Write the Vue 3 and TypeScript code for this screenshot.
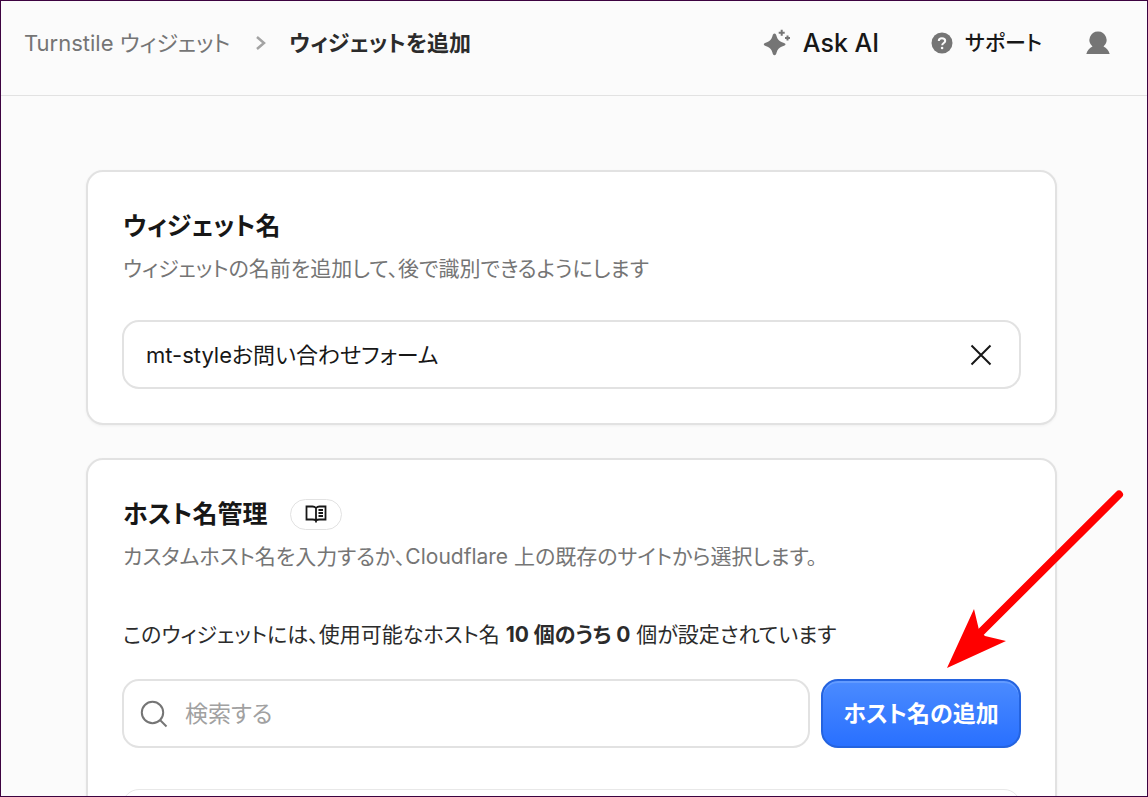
<script setup lang="ts">
import { ref } from 'vue'

const widgetName = ref<string>('mt-styleお問い合わせフォーム')
const query = ref<string>('')
const used = 0
const limit = 10
</script>

<template>
  <div class="page">
    <header class="topbar">
      <nav class="crumbs" aria-label="パンくずリスト">
        <a class="crumb-link" href="#">Turnstile ウィジェット</a>
        <svg class="chevron" viewBox="0 0 12 16" aria-hidden="true"><path d="M2 2l7 6-7 6" /></svg>
        <span class="crumb-current" aria-current="page">ウィジェットを追加</span>
      </nav>
      <div class="actions">
        <button class="action ask" type="button">
          <svg class="icon-spark" viewBox="0 0 28 28" aria-hidden="true">
            <path class="fill" d="M11.500 4.500C12.700 4.500 13.100 5.500 13.600 7.200C14.700 10.500 16 12 19 13.200C21 13.900 22.500 14.200 22.500 15.300C22.500 16.400 21 16.700 19 17.400C16 18.600 14.700 20.100 13.600 23.400C13.100 25.100 12.700 26.200 11.500 26.200C10.300 26.200 9.900 25.100 9.400 23.400C8.300 20.100 7 18.600 4 17.400C2 16.700 .800 16.400 .800 15.300C.800 14.200 2 13.900 4 13.200C7 12 8.300 10.500 9.400 7.200C9.900 5.500 10.300 4.500 11.500 4.500Z" />
            <path class="line" d="M18.700 .800v6M15.700 3.800h6M24.500 6.500v5M22 9h5" />
          </svg>
          <span>Ask AI</span>
        </button>
        <button class="action support" type="button">
          <svg class="icon-help" viewBox="0 0 22 22" aria-hidden="true">
            <circle cx="11" cy="11" r="10.500" />
            <path d="M7.800 8.900C7.800 7.200 9.100 6.200 10.900 6.200S14.200 7.200 14.200 8.900C14.200 11 11.200 11 11.200 13.300" />
            <circle class="dot" cx="11.100" cy="16" r="1.300" />
          </svg>
          <span>サポート</span>
        </button>
        <button class="action user" type="button" aria-label="アカウント">
          <svg class="icon-user" viewBox="0 0 24 24" aria-hidden="true">
            <path d="M12 .500a8.500 8.500 0 0 1 5.500 15C20.500 16.800 22.800 19.500 23.700 23H.300C1.200 19.500 3.500 16.800 6.500 15.500A8.500 8.500 0 0 1 12 .500Z" />
          </svg>
        </button>
      </div>
    </header>

    <main class="content">
      <section class="card">
        <h2 class="title"><label for="widget-name">ウィジェット名</label></h2>
        <p class="desc">ウィジェットの名前を追加して、後で識別できるようにします</p>
        <div class="field name-field">
          <input id="widget-name" v-model="widgetName" class="input" type="text" />
          <button class="clear" type="button" aria-label="クリア" @click="widgetName = ''">
            <svg viewBox="0 0 22 22" aria-hidden="true"><path d="M1.500 1.500l19 19M20.500 1.500l-19 19" /></svg>
          </button>
        </div>
      </section>

      <section class="card">
        <div class="title-row">
          <h2 class="title">ホスト名管理</h2>
          <a class="docs" href="#" aria-label="ドキュメント">
            <svg viewBox="0 0 22 18" aria-hidden="true">
              <path d="M11 3C10 1.900 9 1.500 7.500 1.500H1.500v13H7.500C9 14.500 10.200 14.800 11 15.500C11.800 14.800 13 14.500 14.500 14.500H20.500V1.500H14.500C13 1.500 12 1.900 11 3ZM11 3v14.500M13.500 5h4.500M13.500 8h4.500M13.500 11h4.500" />
            </svg>
          </a>
        </div>
        <p class="desc">カスタムホスト名を入力するか、Cloudflare 上の既存のサイトから選択します。</p>
        <p class="quota">このウィジェットには、使用可能なホスト名 <strong>{{ limit }} 個のうち {{ used }}</strong> 個が設定されています</p>
        <div class="search-row">
          <div class="field search">
            <svg class="icon-search" viewBox="0 0 28 28" aria-hidden="true"><circle cx="12.500" cy="12.500" r="10.700" /><path d="M20 20l6.500 6.500" /></svg>
            <input v-model="query" class="input" type="search" placeholder="検索する" aria-label="検索する" />
          </div>
          <div class="add-wrap">
            <button class="add" type="button">ホスト名の追加</button>
            <svg class="pointer" viewBox="0 0 177 178" aria-hidden="true">
              <path class="shaft" d="M172 4.500L34 142" />
              <path class="head" d="M0 178L27 119L32 140L38 146L59 151Z" />
            </svg>
          </div>
        </div>
        <div class="list"></div>
      </section>
    </main>
  </div>
</template>

<style>
body {
  margin: 0;
  background: #fbfbfb;
}
</style>

<style scoped>
.page {
  box-sizing: border-box;
  height: 100vh;
  overflow: hidden;
  border: 1px solid #3d0340;
  background: #fbfbfb;
  color: #171717;
  font-family: Inter, "Noto Sans CJK JP", sans-serif;
  font-size: 21px;
  line-height: 32px;
  font-feature-settings: "palt";
}
button,
input {
  font: inherit;
  font-feature-settings: inherit;
  color: inherit;
}
h2,
p {
  margin: 0;
}
svg {
  display: block;
  flex: none;
}
.topbar {
  display: flex;
  align-items: center;
  justify-content: space-between;
  box-sizing: border-box;
  height: 95px;
  padding: 0 37px 11px 23px;
  border-bottom: 1px solid #e2e2e2;
  white-space: nowrap;
}
.crumbs {
  display: flex;
  align-items: center;
  font-size: 22px;
}
.crumb-link {
  color: #757575;
  text-decoration: none;
}
.chevron {
  width: 12px;
  height: 16px;
  margin: 0 22px 0 25px;
  fill: none;
  stroke: #a3a3a3;
  stroke-width: 2.5;
}
.crumb-current {
  color: #2b2b2b;
  font-weight: 600;
}
.actions {
  display: flex;
  align-items: center;
}
.action {
  display: flex;
  align-items: center;
  gap: 12px;
  padding: 0;
  border: 0;
  background: none;
  font-weight: 500;
}
.ask {
  font-size: 25px;
}
.support {
  margin-left: 52px;
}
.user {
  margin-left: 44px;
}
.icon-spark {
  width: 28px;
  height: 28px;
}
.icon-spark .fill,
.icon-user {
  fill: #757575;
}
.icon-spark .line {
  stroke: #757575;
  stroke-width: 2;
}
.icon-help {
  width: 22px;
  height: 22px;
  fill: #757575;
}
.icon-help path {
  fill: none;
  stroke: #fbfbfb;
  stroke-width: 2;
}
.icon-help .dot {
  fill: #fbfbfb;
}
.icon-user {
  width: 24px;
  height: 24px;
}
.content {
  display: flex;
  flex-direction: column;
  gap: 33px;
  padding: 74px 90px 0 85px;
}
.card {
  padding: 36px 34px 34px;
  border: 2px solid #e2e2e2;
  border-radius: 17px;
  background: #fff;
  box-shadow: 0 1px 3px rgba(0, 0, 0, 0.05);
}
.title,
.desc,
.quota {
  padding-left: 1px;
}
.title {
  font-size: 25px;
  line-height: 36px;
  font-weight: 600;
}
.title-row {
  display: flex;
  align-items: center;
  gap: 23px;
}
.docs {
  display: flex;
  align-items: center;
  justify-content: center;
  box-sizing: border-box;
  width: 52px;
  height: 31px;
  border: 1px solid #e2e2e2;
  border-radius: 16px;
}
.docs svg {
  width: 22px;
  height: 18px;
  fill: none;
  stroke: #171717;
  stroke-width: 1.8;
}
.desc {
  margin-top: 9px;
  color: #757575;
}
.field {
  display: flex;
  align-items: center;
  box-sizing: border-box;
  height: 69px;
  border: 2px solid #e2e2e2;
  border-radius: 17px;
  background: #fff;
}
.name-field {
  margin-top: 35px;
  padding: 0 27px 0 22px;
  font-size: 22px;
}
.input {
  flex: 1;
  min-width: 0;
  padding: 0;
  border: 0;
  outline: 0;
  background: none;
  appearance: none;
}
.input::placeholder {
  color: #a1a1a1;
  opacity: 1;
}
.clear {
  padding: 0;
  border: 0;
  background: none;
}
.clear svg {
  width: 22px;
  height: 22px;
  fill: none;
  stroke: #171717;
  stroke-width: 2;
}
.quota {
  margin-top: 46px;
  color: #2b2b2b;
}
.quota strong {
  font-weight: 700;
}
.search-row {
  display: flex;
  gap: 11px;
  margin-top: 28px;
}
.search {
  flex: 1;
  gap: 17px;
  padding: 0 16px;
  font-size: 23px;
}
.icon-search {
  width: 28px;
  height: 28px;
  fill: none;
  stroke: #757575;
  stroke-width: 2;
}
.add-wrap {
  position: relative;
}
.add {
  box-sizing: border-box;
  width: 200px;
  height: 69px;
  padding: 0;
  border: 2px solid #2463df;
  border-radius: 17px;
  background: linear-gradient(#4b8bff, #2970ff);
  box-shadow: inset 0 2px 0 #639bff;
  color: #fff;
  font-size: 23px;
  font-weight: 600;
  white-space: nowrap;
}
.pointer {
  position: absolute;
  right: -103px;
  bottom: calc(100% + 11px);
  width: 177px;
  height: 178px;
  pointer-events: none;
}
.shaft {
  stroke: #f00;
  stroke-width: 8;
  stroke-linecap: round;
}
.head {
  fill: #f00;
}
.list {
  height: 120px;
  margin-top: 41px;
  border: 1px solid #e8e8e8;
  border-radius: 17px;
}
</style>
